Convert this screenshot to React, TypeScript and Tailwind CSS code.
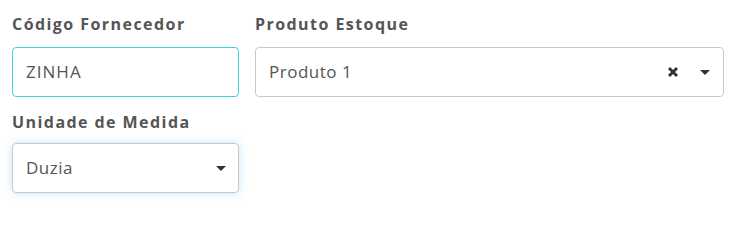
import React from "react";

function Caret() {
  return (
    <svg width="10" height="5" viewBox="0 0 10 5" className="block">
      <path d="M0 0 L10 0 L5 5 Z" fill="#333" />
    </svg>
  );
}

function XIcon() {
  return (
    <svg width="12" height="12" viewBox="0 0 12 12" className="block">
      <path d="M2 2 L10 10 M10 2 L2 10" stroke="#333" strokeWidth="3" strokeLinecap="butt" />
    </svg>
  );
}

export default function App() {
  const font = { fontFamily: '"Open Sans", "Liberation Sans", sans-serif' };
  return (
    <div className="w-[731px] h-[231px] bg-white pl-[12px] pr-[7px] pt-[14px]" style={font}>
      <div className="grid grid-cols-[227px_469px] gap-x-[16px]">
        <div className="flex flex-col">
          <label className="h-[21px] text-[16px] font-bold text-[#555] tracking-[0.09em] leading-[21px]">Código Fornecedor</label>
          <div className="mt-[12px] h-[50px] rounded-[4px] border border-[#3fd3e2] flex items-center pl-[13px] text-[17px] tracking-[0.06em] text-[#555]">
            ZINHA
          </div>
        </div>
        <div className="flex flex-col">
          <label className="h-[21px] text-[16px] font-bold text-[#555] tracking-[0.09em] leading-[21px]">Produto Estoque</label>
          <div className="mt-[12px] h-[50px] rounded-[4px] border border-[#c8c8c8] flex items-center pl-[13px] pr-[13px] text-[17px] tracking-[0.03em] text-[#555]">
            <span className="flex-1">Produto 1</span>
            <XIcon />
            <div className="ml-[21px]"><Caret /></div>
          </div>
        </div>
        <div className="flex flex-col mt-[15px]">
          <label className="h-[21px] text-[16px] font-bold text-[#555] tracking-[0.09em] leading-[21px]">Unidade de Medida</label>
          <div className="mt-[10px] h-[50px] rounded-[4px] border border-[#c8c8c8] shadow-[0_0_8px_rgba(102,175,233,0.35)] flex items-center pl-[13px] pr-[12px] text-[17px] tracking-[0.03em] text-[#555]">
            <span className="flex-1">Duzia</span>
            <Caret />
          </div>
        </div>
      </div>
    </div>
  );
}
